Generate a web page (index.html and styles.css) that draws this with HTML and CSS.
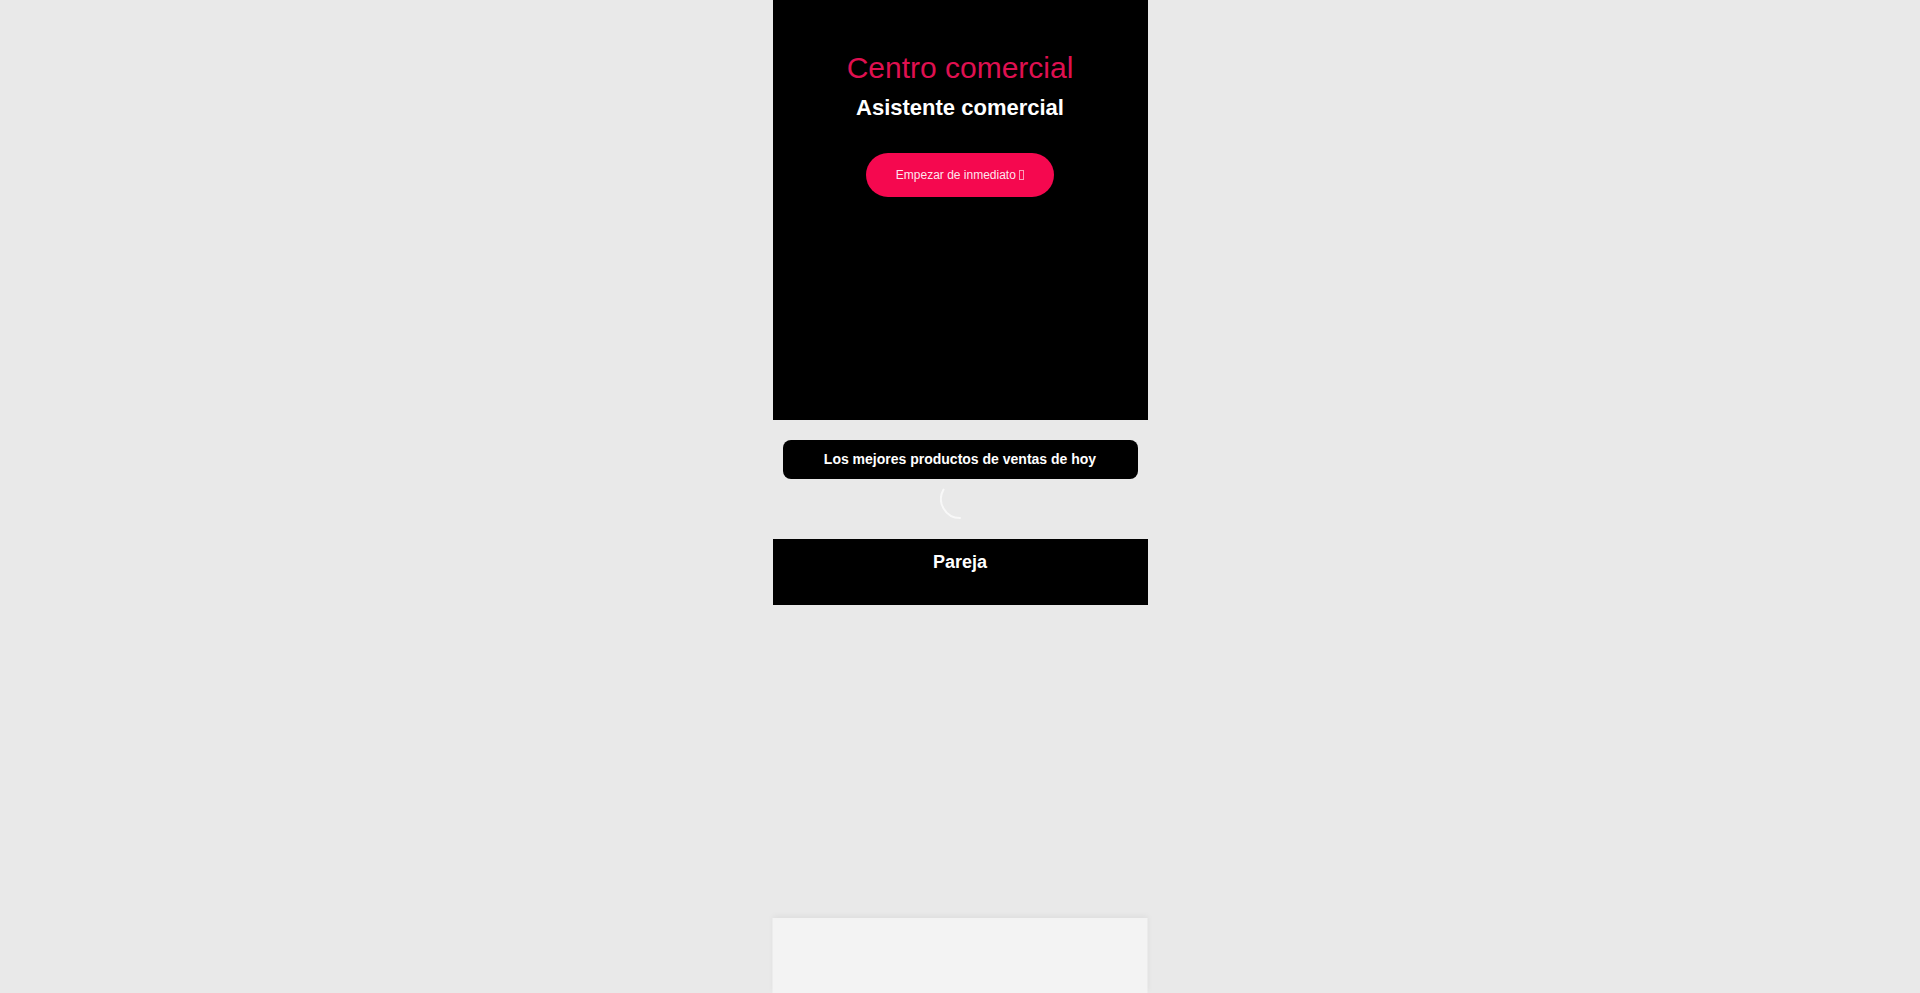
FILE: index.html
```html
<!DOCTYPE html>
<html lang="es">
<head>
<meta charset="utf-8">
<title>Centro comercial</title>
<link rel="stylesheet" href="styles.css">
</head>
<body>
<div class="app">
  <section class="hero">
    <h1 class="hero-title">Centro comercial</h1>
    <h2 class="hero-sub">Asistente comercial</h2>
    <a class="hero-btn" href="#">Empezar de inmediato <span class="tofu"></span></a>
  </section>
  <div class="best">Los mejores productos de ventas de hoy</div>
  <div class="loader">
    <svg class="spinner" width="40" height="40" viewBox="0 0 40 40">
      <path d="M3.55 10.5 A19 19 0 0 0 20 39" fill="none" stroke="#fbfbfb" stroke-width="2" stroke-linecap="round"/>
    </svg>
  </div>
  <section class="pareja">
    <h3 class="pareja-title">Pareja</h3>
  </section>
</div>
<div class="tabbar"></div>
</body>
</html>
```

FILE: styles.css
```css
html, body {
  margin: 0;
  padding: 0;
}
body {
  background: #e9e9e9;
  font-family: "Liberation Sans", Arial, sans-serif;
  min-height: 993px;
}
.app {
  width: 375px;
  margin: 0 auto;
}
.hero {
  background: #000;
  height: 420px;
  box-sizing: border-box;
  padding-top: 51px;
  display: flex;
  flex-direction: column;
  align-items: center;
}
.hero-title {
  margin: 0;
  font-size: 30px;
  line-height: 34px;
  font-weight: normal;
  color: #df1050;
}
.hero-sub {
  margin: 10px 0 0;
  font-size: 22px;
  line-height: 25px;
  font-weight: bold;
  color: #fff;
}
.hero-btn {
  margin-top: 33px;
  display: block;
  width: 188px;
  height: 44px;
  line-height: 44px;
  border-radius: 22px;
  background: #f5084f;
  color: rgba(255, 255, 255, 0.92);
  font-size: 12px;
  text-align: center;
  text-decoration: none;
}
.tofu {
  display: inline-block;
  width: 3px;
  height: 8px;
  border: 1px solid rgba(255, 255, 255, 0.6);
  vertical-align: -1px;
}
.best {
  margin: 20px 10px 0;
  height: 39px;
  line-height: 39px;
  border-radius: 8px;
  background: #000;
  color: #fff;
  font-size: 14px;
  font-weight: bold;
  text-align: center;
}
.loader {
  height: 60px;
  display: flex;
  justify-content: center;
}
.spinner {
  display: block;
  margin-top: 0;
  opacity: 0.85;
}
.pareja {
  background: #000;
  height: 66px;
  box-sizing: border-box;
  padding-top: 13px;
}
.pareja-title {
  margin: 0;
  text-align: center;
  color: #fff;
  font-size: 18px;
  line-height: 21px;
  font-weight: bold;
}
.tabbar {
  position: fixed;
  left: 50%;
  bottom: 0;
  transform: translateX(-50%);
  width: 375px;
  height: 75px;
  background: #f3f3f3;
  box-shadow: 0 -2px 6px rgba(0, 0, 0, 0.05);
}
```
